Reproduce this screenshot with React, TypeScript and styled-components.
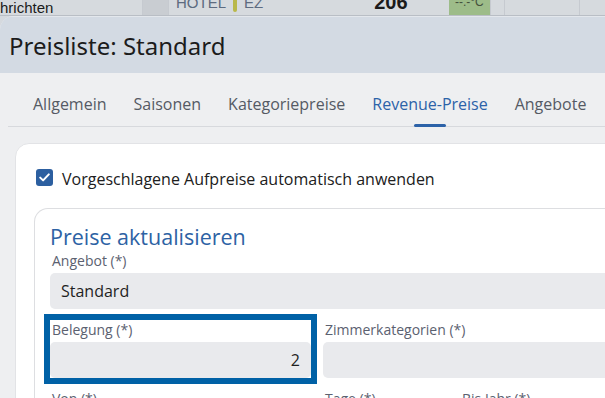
import React, { FC } from 'react';
import styled, { createGlobalStyle } from 'styled-components';

const GlobalStyle = createGlobalStyle`
    html, body {
        margin: 0;
        padding: 0;
        overflow: hidden;
        background: #d5d9de;
    }
    body {
        font-family: "Open Sans", "Noto Sans", sans-serif;
    }
`

const Page = styled.div`
    width: 605px;
    height: 398px;
    overflow: hidden;
    display: flex;
    flex-direction: column;
`

// background app bar, mostly hidden behind the dialog
const AppBar = styled.div`
    height: 15px;
    flex: none;
    display: flex;
    align-items: flex-end;
    overflow: hidden;
    background: #d6dade;
    border-bottom: 1px solid #b9bec5;
    font-family: "Liberation Sans", Arial, sans-serif;
`

const AppCell = styled.div<{ $w: number; $h?: number; $bg?: string }>`
    width: ${(p) => p.$w}px;
    height: ${(p) => p.$h || 26}px;
    flex: none;
    display: flex;
    align-items: center;
    gap: 7px;
    background: ${(p) => p.$bg || 'transparent'};
    border-right: 1px solid #c6cad0;
    box-sizing: border-box;
`

const AppText = styled.span<{ $color?: string; $size?: number; $bold?: boolean }>`
    font-size: ${(p) => p.$size || 15}px;
    font-weight: ${(p) => (p.$bold ? 700 : 400)};
    color: ${(p) => p.$color || '#1b1b1b'};
    white-space: nowrap;
`

const YellowBar = styled.span`
    width: 4px;
    height: 20px;
    border-radius: 2px;
    background: #b9b84a;
`

const Dialog = styled.div`
    width: 700px;
    flex: 1;
    display: flex;
    flex-direction: column;
    background: #eeeff1;
    border-top-left-radius: 14px;
    overflow: hidden;
`

const Header = styled.div`
    height: 57px;
    flex: none;
    display: flex;
    align-items: center;
    padding: 0 0 0 9px;
    background: #d3dae3;
    border-top: 1px solid #e3e7ec;
    box-sizing: border-box;
`

const Title = styled.h1`
    margin: 0;
    font-family: "Noto Sans", "Open Sans", sans-serif;
    font-size: 24px;
    font-weight: 400;
    color: #1c1c1c;
`

const Tabs = styled.div`
    margin: 0 0 0 8px;
    padding: 11px 0 0 11.5px;
    display: flex;
    border-bottom: 1px solid #d7d9dd;
`

const Tab = styled.div<{ $active?: boolean }>`
    position: relative;
    padding: 9px 13.5px 11px;
    font-size: 16px;
    line-height: 22px;
    color: ${(p) => (p.$active ? '#2c62a8' : '#555a64')};

    &::after {
        content: '';
        display: ${(p) => (p.$active ? 'block' : 'none')};
        position: absolute;
        left: 50%;
        bottom: -1px;
        width: 32px;
        height: 3px;
        margin-left: -16px;
        border-radius: 2px;
        background: #2c62a8;
    }
`

const Card = styled.div`
    margin: 16px 0 0 15px;
    flex: 1;
    background: #fff;
    border: 1px solid #e2e3e6;
    border-radius: 14px 0 0 0;
    padding: 15px 0 0 18px;
    display: flex;
    flex-direction: column;
`

const CheckRow = styled.div`
    display: flex;
    align-items: center;
    height: 37px;
    padding-left: 2px;
`

const CheckBox = styled.span`
    width: 17px;
    height: 17px;
    flex: none;
    border-radius: 3px;
    background: #2c5fa0;
    display: flex;
    align-items: center;
    justify-content: center;
`

const CheckLabel = styled.span`
    margin-left: 9px;
    font-size: 16px;
    line-height: 22px;
    padding-top: 2px;
    color: #202020;
    flex: 1;
`

const GhostButton = styled.div`
    width: 80px;
    height: 37px;
    border-radius: 8px;
    background: #f2f3f5;
    margin-right: -3px;
`

const Section = styled.div`
    margin-top: 12px;
    flex: 1;
    border: 1px solid #dddee1;
    border-right: none;
    border-radius: 14px 0 0 0;
    padding: 14px 0 0 15px;
`

const SectionTitle = styled.h2`
    margin: 0;
    font-size: 21.5px;
    font-weight: 400;
    line-height: 28px;
    color: #2d62a4;
`

const FieldGrid = styled.div<{ $cols: string }>`
    display: grid;
    grid-template-columns: ${(p) => p.$cols};
    column-gap: 12px;
    margin-top: 11px;
`

const FirstGrid = styled(FieldGrid)`
    margin-top: 0;
`

const Field = styled.div<{ $focus?: boolean }>`
    display: flex;
    flex-direction: column;
    outline: ${(p) => (p.$focus ? '6px solid #0061a6' : 'none')};
`

const Label = styled.label`
    height: 20px;
    line-height: 20px;
    padding-left: 2px;
    font-size: 14px;
    color: #5b6170;
    white-space: nowrap;
`

const Input = styled.div<{ $right?: boolean }>`
    height: 36px;
    margin-top: 2px;
    border-radius: 5px;
    background: #e9eaed;
    display: flex;
    align-items: center;
    justify-content: ${(p) => (p.$right ? 'flex-end' : 'flex-start')};
    padding: 0 11px 0 11px;
    font-size: 16px;
    color: #1f1f1f;
`

const Check = () => (
    <svg width="11" height="9" viewBox="0 0 11 9">
        <path d="M1.2 4.6 L4.1 7.4 L9.8 1.4" fill="none" stroke="#fff" strokeWidth="2" strokeLinecap="round" strokeLinejoin="round" />
    </svg>
)

const tabs = ['Allgemein', 'Saisonen', 'Kategoriepreise', 'Revenue-Preise', 'Angebote']

const App: FC = () => {
    return (
        <Page>
            <GlobalStyle />
            <AppBar>
                <AppCell $w={143} $h={15}>
                    <AppText $size={15}>hrichten</AppText>
                </AppCell>
                <AppCell $w={26} $bg="#c9cdd2" />
                <AppCell $w={280} style={{ paddingLeft: 7, borderRight: 'none' }}>
                    <AppText $color="#5d6b80">HOTEL</AppText>
                    <YellowBar />
                    <AppText $color="#5d6b80">EZ</AppText>
                    <AppText $size={20} $bold style={{ marginLeft: 104 }}>206</AppText>
                </AppCell>
                <AppCell $w={42} $bg="#9dbc89" style={{ paddingLeft: 6 }}>
                    <AppText $size={12} $color="#44513c">--.-°C</AppText>
                </AppCell>
                <AppCell $w={14} />
                <AppCell $w={75} />
            </AppBar>
            <Dialog>
                <Header>
                    <Title>Preisliste: Standard</Title>
                </Header>
                <Tabs>
                    {tabs.map((t) => (
                        <Tab key={t} $active={t === 'Revenue-Preise'}>{t}</Tab>
                    ))}
                </Tabs>
                <Card>
                    <CheckRow>
                        <CheckBox><Check /></CheckBox>
                        <CheckLabel>Vorgeschlagene Aufpreise automatisch anwenden</CheckLabel>
                        <GhostButton />
                    </CheckRow>
                    <Section>
                        <SectionTitle>Preise aktualisieren</SectionTitle>
                        <FirstGrid $cols="1fr">
                            <Field>
                                <Label>Angebot (*)</Label>
                                <Input>Standard</Input>
                            </Field>
                        </FirstGrid>
                        <FieldGrid $cols="261px 1fr">
                            <Field $focus>
                                <Label>Belegung (*)</Label>
                                <Input $right>2</Input>
                            </Field>
                            <Field>
                                <Label>Zimmerkategorien (*)</Label>
                                <Input />
                            </Field>
                        </FieldGrid>
                        <FieldGrid $cols="261px 125px 1fr">
                            <Field><Label>Von (*)</Label></Field>
                            <Field><Label>Tage (*)</Label></Field>
                            <Field><Label>Bis Jahr (*)</Label></Field>
                        </FieldGrid>
                    </Section>
                </Card>
            </Dialog>
        </Page>
    );
}

export default App;
